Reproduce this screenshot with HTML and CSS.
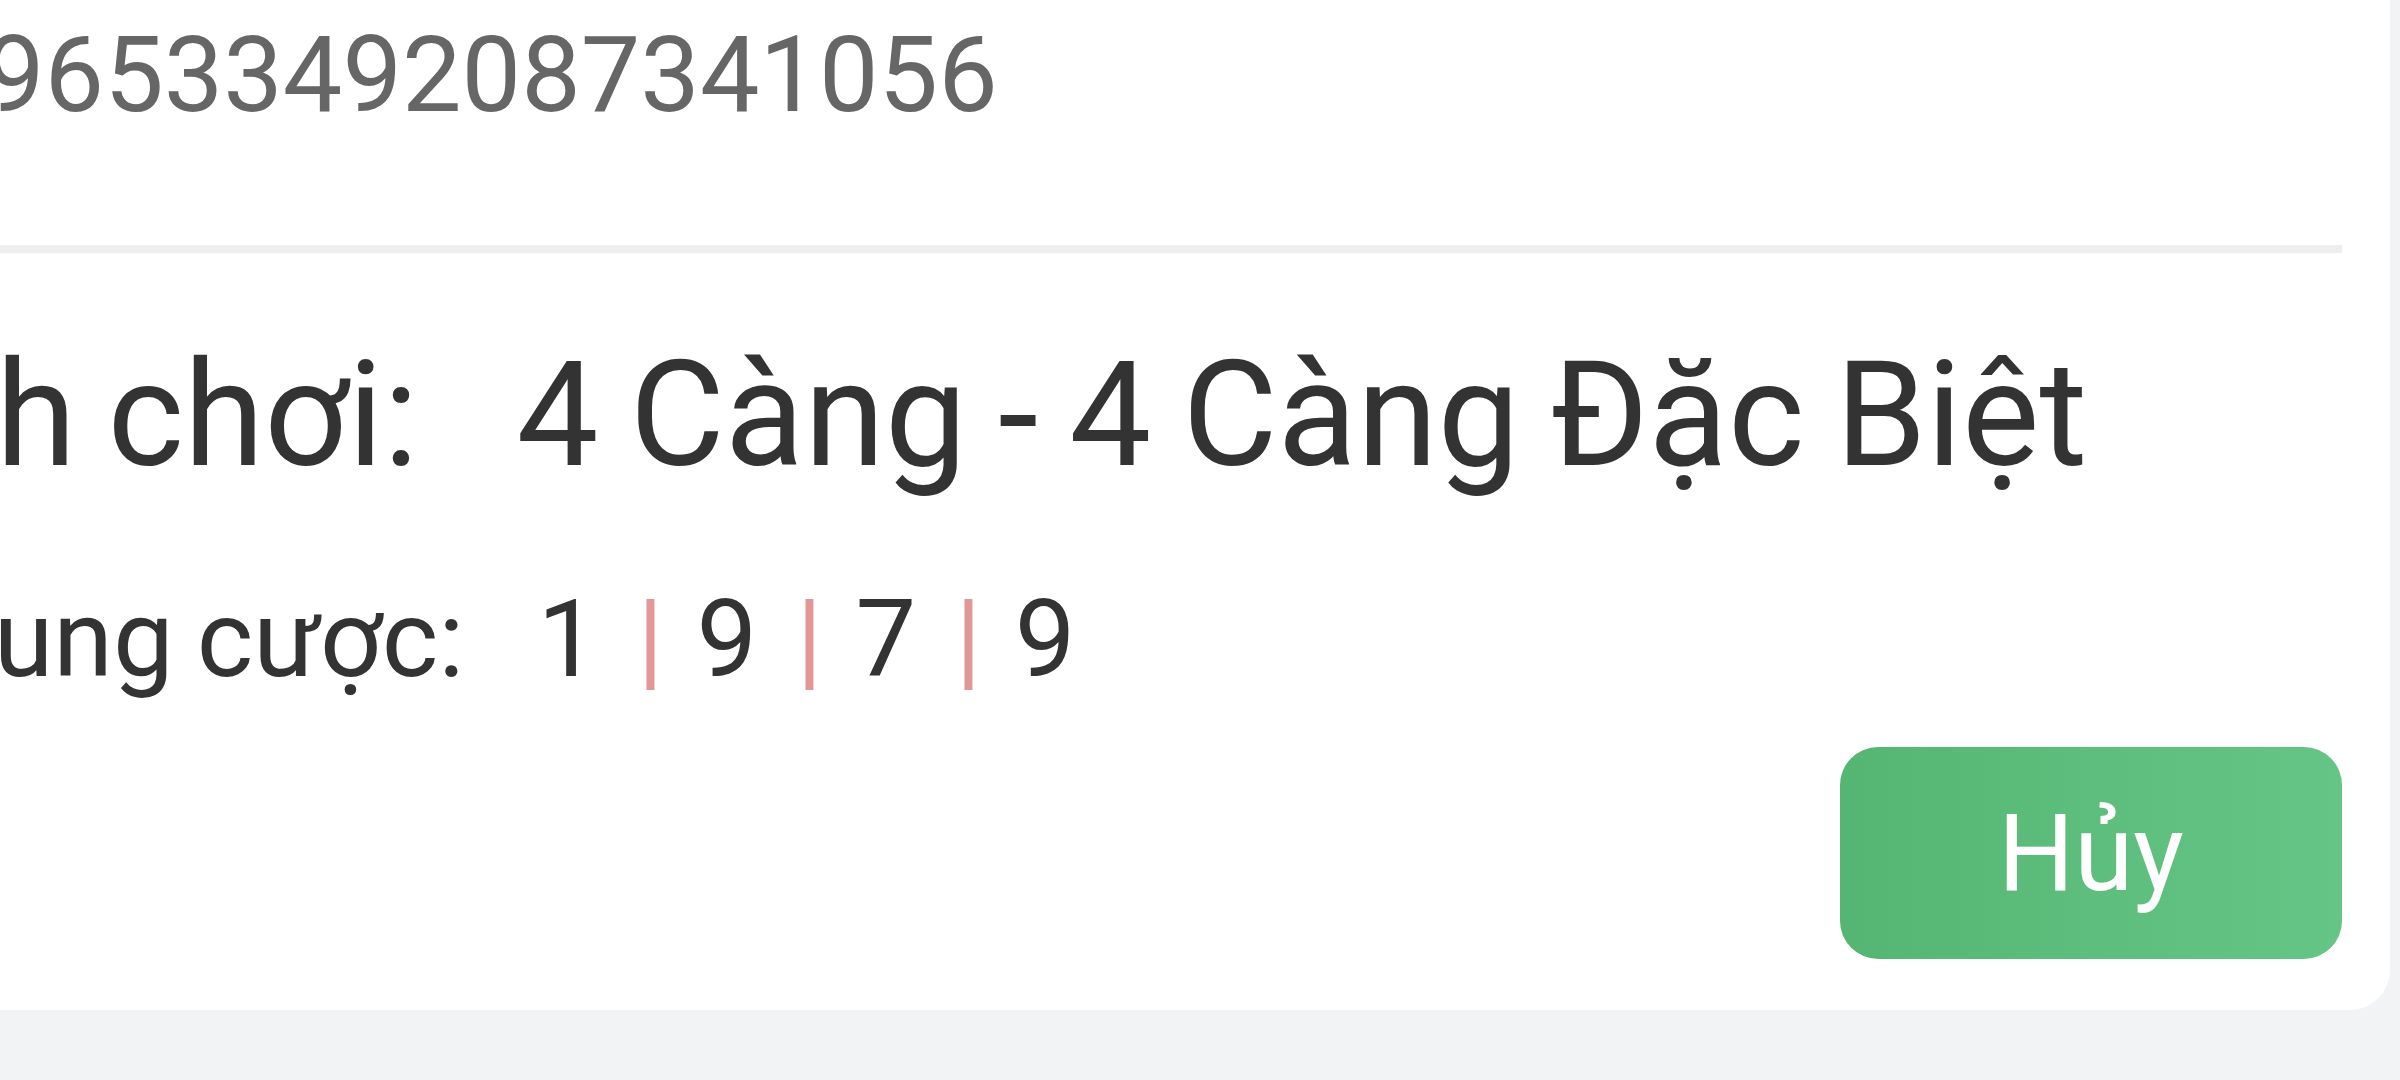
FILE: index.html
```html
<!DOCTYPE html>
<html lang="vi">
<head>
<meta charset="utf-8">
<title>Chi tiết cược</title>
<link rel="stylesheet" href="styles.css">
</head>
<body>
<div class="page">
  <section class="card">
    <div class="order-no">96533492087341056</div>
    <div class="divider"></div>
    <div class="row row-title">
      <span class="label">Cách chơi:</span>
      <span class="value">4 Càng - 4 Càng Đặc Biệt</span>
    </div>
    <div class="row row-bet">
      <span class="label">Nội dung cược:</span>
      <span class="value nums"><span class="num">1</span><span class="sep">|</span><span class="num">9</span><span class="sep">|</span><span class="num">7</span><span class="sep">|</span><span class="num">9</span></span>
    </div>
    <div class="actions">
      <button class="btn-cancel" type="button">Hủy</button>
    </div>
  </section>
</div>
</body>
</html>
```

FILE: styles.css
```css
html, body {
  margin: 0;
  padding: 0;
}
body {
  width: 2400px;
  height: 1080px;
  overflow: hidden;
  background: #f2f3f5;
  font-family: Roboto, "Noto Sans", "Liberation Sans", sans-serif;
}
.page {
  width: 2400px;
  height: 1080px;
  overflow: hidden;
}
.card {
  margin-left: -300px;
  margin-right: 10px;
  padding: 0 48px 51px 45px;
  background: #ffffff;
  border-bottom-right-radius: 40px;
}
.order-no {
  padding-left: 240px;
  font-size: 106px;
  line-height: 150px;
  color: #666666;
  white-space: nowrap;
}
.divider {
  margin-top: 95px;
  margin-left: -100px;
  height: 8px;
  background: #eeeeee;
}
.row {
  display: flex;
  align-items: baseline;
  white-space: nowrap;
  color: #333333;
  word-spacing: -0.035em;
}
.row-title {
  margin-top: 63px;
  font-size: 146px;
  line-height: 200px;
}
.row-title .value {
  margin-left: 98px;
}
.row-bet {
  margin-top: 48px;
  font-size: 108px;
  line-height: 150px;
}
.row-bet .value {
  margin-left: 73px;
}
.nums {
  display: flex;
  align-items: baseline;
}
.sep {
  color: #e29696;
  margin: 0 33px 0 39px;
}
.actions {
  display: flex;
  justify-content: flex-end;
  margin-top: 33px;
}
.btn-cancel {
  width: 502px;
  height: 212px;
  border: none;
  border-radius: 38px;
  background: linear-gradient(to right, #55b673, #64c586);
  color: #ffffff;
  font-family: Roboto, "Noto Sans", sans-serif;
  font-size: 107px;
  line-height: 1;
  padding: 0;
}
```
